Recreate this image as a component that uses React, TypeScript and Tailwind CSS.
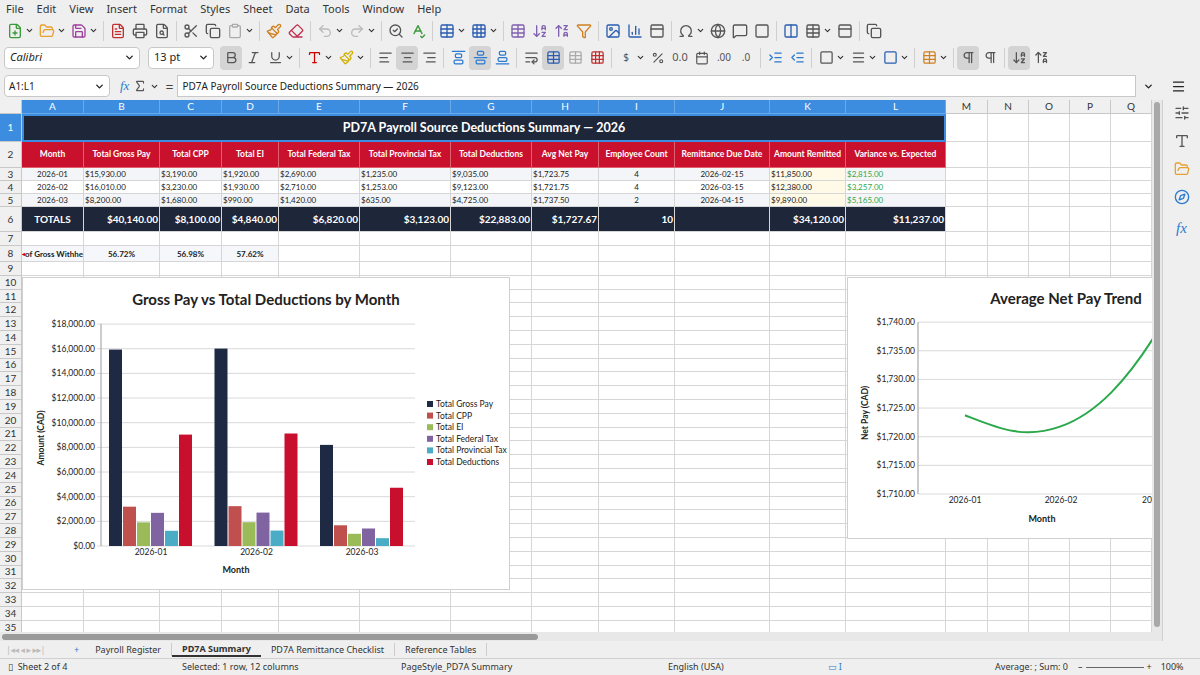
import React from "react";
import { FilePlus, FolderOpen, Save, FileText, Printer, FileSearch, Scissors, Copy, Clipboard, Paintbrush, Eraser, Undo2, Redo2, SearchCheck, SpellCheck, Table, Grid3x3, ArrowDownAZ, ArrowUpZA, Filter, Image, BarChart3, Omega, Globe, MessageSquare, Square, Columns, PanelTop, Bold, Italic, Underline, AlignLeft, AlignCenter, AlignRight, AlignVerticalJustifyStart, AlignVerticalJustifyCenter, AlignVerticalJustifyEnd, WrapText, Percent, Calendar, IndentIncrease, IndentDecrease, Menu, SlidersHorizontal, Compass, ChevronDown, Pilcrow, Sigma, Type } from "lucide-react";

const UI = { fontFamily: '"Noto Sans", "DejaVu Sans", sans-serif' };
const CELL = { fontFamily: 'Lato, "Open Sans", sans-serif' };

const colW = [62, 76, 62, 57, 81, 91, 81, 67, 76, 95, 76, 100, 42, 41, 41, 41, 41];
const letters = "ABCDEFGHIJKLMNOPQ".split("");

const headers = ["Month", "Total Gross Pay", "Total CPP", "Total EI", "Total Federal Tax", "Total Provincial Tax", "Total Deductions", "Avg Net Pay", "Employee Count", "Remittance Due Date", "Amount Remitted", "Variance vs. Expected"];
const data = [
  ["2026-01", "$15,930.00", "$3,190.00", "$1,920.00", "$2,690.00", "$1,235.00", "$9,035.00", "$1,723.75", "4", "2026-02-15", "$11,850.00", "$2,815.00"],
  ["2026-02", "$16,010.00", "$3,230.00", "$1,930.00", "$2,710.00", "$1,253.00", "$9,123.00", "$1,721.75", "4", "2026-03-15", "$12,380.00", "$3,257.00"],
  ["2026-03", "$8,200.00", "$1,680.00", "$990.00", "$1,420.00", "$635.00", "$4,725.00", "$1,737.50", "2", "2026-04-15", "$9,890.00", "$5,165.00"],
];
const totals = ["TOTALS", "$40,140.00", "$8,100.00", "$4,840.00", "$6,820.00", "$3,123.00", "$22,883.00", "$1,727.67", "10", "", "$34,120.00", "$11,237.00"];

function Tb({ children, active = false }: { children: React.ReactNode; active?: boolean }) {
  return <div className={`flex items-center justify-center h-[24px] min-w-[22px] px-[2px] rounded-sm text-[#555] ${active ? "bg-[#d4d4d4]" : ""}`}>{children}</div>;
}
const Sep = () => <div className="w-px h-[20px] bg-[#d0d0d0] mx-[3px]" />;
const Dd = () => <ChevronDown size={9} className="text-[#333] -ml-[1px] mr-[2px]" strokeWidth={3} />;

function RowHead({ n, h, sel = false }: { n: string; h: string; sel?: boolean }) {
  return <div className={`w-[22px] shrink-0 ${h} flex items-center justify-center text-[10px] border-b border-r border-[#c8c8c8] ${sel ? "bg-[#3c8de0] text-white" : "bg-[#f0f0f0] text-[#333]"}`}>{n}</div>;
}

function BarChart() {
  const y0 = 268, k = 12.33 / 1000;
  const vals = [[15930, 3190, 1920, 2690, 1235, 9035], [16010, 3230, 1930, 2710, 1253, 9123], [8200, 1680, 990, 1420, 635, 4725]];
  const cols = ["#1e2a44", "#c0504d", "#9bbb59", "#8064a2", "#4bacc6", "#c8102e"];
  const names = ["Total Gross Pay", "Total CPP", "Total EI", "Total Federal Tax", "Total Provincial Tax", "Total Deductions"];
  return (
    <svg width="486" height="311" className="block" style={CELL}>
      <rect x="0" y="0" width="486" height="311" fill="white" />
      <text x="243" y="27" textAnchor="middle" fontSize="15" fontWeight="bold" fill="#222">Gross Pay vs Total Deductions by Month</text>
      {Array.from({ length: 10 }).map((_, i) => {
        const y = y0 - i * 2000 * k;
        return <g key={i}><line x1="74" x2="392" y1={y} y2={y} stroke="#d9d9d9" /><text x="72" y={y + 3} textAnchor="end" fontSize="8.5" fill="#222">${(i * 2000).toLocaleString("en-US")}.00</text></g>;
      })}
      <line x1="78" x2="78" y1={y0 - 18000 * k} y2={y0} stroke="#999" />
      {vals.map((g, gi) => g.map((v, i) => {
        const x = 86 + gi * 105.5 + i * 14;
        return <rect key={gi + "-" + i} x={x} y={y0 - v * k} width="13" height={v * k} fill={cols[i]} />;
      }))}
      {["2026-01", "2026-02", "2026-03"].map((m, i) => <text key={m} x={128 + i * 105.5} y={y0 + 9} textAnchor="middle" fontSize="8.5" fill="#222">{m}</text>)}
      <text x="213" y={y0 + 27} textAnchor="middle" fontSize="9" fontWeight="bold" fill="#222">Month</text>
      <text transform={`translate(21,160) rotate(-90)`} textAnchor="middle" fontSize="8.5" fontWeight="bold" fill="#222">Amount (CAD)</text>
      {names.map((n, i) => <g key={n}><rect x="404" y={123 + i * 11.6} width="6" height="6" fill={cols[i]} /><text x="413" y={129 + i * 11.6} fontSize="8.5" fill="#222">{n}</text></g>)}
    </svg>
  );
}

function LineChart() {
  const y = (v: number) => 216 - (v - 1710) * 5.73;
  return (
    <svg width="305" height="260" className="block" style={CELL}>
      <rect x="0" y="0" width="305" height="260" fill="white" />
      <text x="218" y="26" textAnchor="middle" fontSize="15" fontWeight="bold" fill="#222">Average Net Pay Trend</text>
      {[1710, 1715, 1720, 1725, 1730, 1735, 1740].map((v) => <g key={v}><line x1="70" x2="305" y1={y(v)} y2={y(v)} stroke="#d9d9d9" /><text x="67" y={y(v) + 3} textAnchor="end" fontSize="8.5" fill="#222">${v.toLocaleString("en-US")}.00</text></g>)}
      <line x1="70" x2="70" y1={y(1740)} y2={y(1710)} stroke="#999" />
      <path d={`M 117 ${y(1723.75)} C 150 ${y(1721.5)}, 175 ${y(1719.5)}, 212 ${y(1721.75)} S 280 ${y(1730)}, 310 ${y(1738.5)}`} stroke="#2aa84a" strokeWidth="2" fill="none" />
      {["2026-01", "2026-02"].map((m, i) => <text key={m} x={117 + i * 96} y="225" textAnchor="middle" fontSize="8.5" fill="#222">{m}</text>)}
      <text x="294" y="225" fontSize="8.5" fill="#222">202</text>
      <text x="194" y="244" textAnchor="middle" fontSize="9" fontWeight="bold" fill="#222">Month</text>
      <text transform="translate(20,135) rotate(-90)" textAnchor="middle" fontSize="8.5" fontWeight="bold" fill="#222">Net Pay (CAD)</text>
    </svg>
  );
}

export default function App() {
  const cellBase = "shrink-0 border-r border-b border-[#d6d6d6] overflow-hidden whitespace-nowrap flex items-center";
  const emptyRest = (h: string, from: number) => colW.slice(from).map((w, i) => <div key={i} className={`${cellBase} ${h} bg-white`} style={{ width: w }} />);
  const align = (i: number) => (i === 0 || i === 8 || i === 9 ? "justify-center" : "justify-start pl-[1px]");
  return (
    <div className="w-[1200px] h-[675px] overflow-hidden bg-[#efefef] flex flex-col text-[#222]" style={UI}>
      {/* Menu */}
      <div className="h-[18px] shrink-0 flex items-center gap-[13px] px-[6px] text-[11px] text-[#333]">
        {["File", "Edit", "View", "Insert", "Format", "Styles", "Sheet", "Data", "Tools", "Window", "Help"].map((m) => <span key={m}>{m}</span>)}
      </div>
      {/* Toolbar 1 */}
      <div className="h-[25px] shrink-0 flex items-center px-[4px]">
        <Tb><FilePlus size={16} className="text-[#3a9a3a]" /></Tb><Dd />
        <Tb><FolderOpen size={16} className="text-[#e8a030]" /></Tb><Dd />
        <Tb><Save size={16} className="text-[#a040a0]" /></Tb><Dd />
        <Sep />
        <Tb><FileText size={16} className="text-[#c03030]" /></Tb><Tb><Printer size={16} /></Tb><Tb><FileSearch size={16} /></Tb>
        <Sep />
        <Tb><Scissors size={16} /></Tb><Tb><Copy size={16} /></Tb><Tb><Clipboard size={16} className="text-[#aaa]" /></Tb><Dd />
        <Sep />
        <Tb><Paintbrush size={16} className="text-[#d08020]" /></Tb><Tb><Eraser size={16} className="text-[#c03050]" /></Tb>
        <Sep />
        <Tb><Undo2 size={16} className="text-[#bbb]" /></Tb><Dd /><Tb><Redo2 size={16} className="text-[#bbb]" /></Tb><Dd />
        <Sep />
        <Tb><SearchCheck size={16} /></Tb><Tb><SpellCheck size={16} className="text-[#3a9a3a]" /></Tb>
        <Sep />
        <Tb><Table size={16} className="text-[#2a5db0]" /></Tb><Dd /><Tb><Grid3x3 size={16} className="text-[#2a5db0]" /></Tb><Dd />
        <Sep />
        <Tb><Table size={16} className="text-[#8060b0]" /></Tb><Tb><ArrowDownAZ size={16} className="text-[#8060b0]" /></Tb><Tb><ArrowUpZA size={16} className="text-[#8060b0]" /></Tb><Tb><Filter size={16} className="text-[#d08020]" /></Tb>
        <Sep />
        <Tb><Image size={16} className="text-[#2a5db0]" /></Tb><Tb><BarChart3 size={16} className="text-[#2a5db0]" /></Tb><Tb><PanelTop size={16} /></Tb>
        <Sep />
        <Tb><Omega size={16} /></Tb><Dd /><Tb><Globe size={16} /></Tb><Tb><MessageSquare size={16} /></Tb><Tb><Square size={16} /></Tb>
        <Sep />
        <Tb><Columns size={16} className="text-[#2a5db0]" /></Tb><Tb><Table size={16} /></Tb><Dd /><Tb><PanelTop size={16} /></Tb>
        <Sep />
        <Tb><Copy size={16} /></Tb>
      </div>
      {/* Toolbar 2 */}
      <div className="h-[29px] shrink-0 flex items-center px-[4px]">
        <div className="w-[136px] h-[22px] bg-white border border-[#c8c8c8] rounded-sm flex items-center justify-between pl-[5px] pr-[4px] text-[11px] italic">Calibri<ChevronDown size={11} strokeWidth={3} /></div>
        <div className="w-[66px] h-[22px] ml-[8px] bg-white border border-[#c8c8c8] rounded-sm flex items-center justify-between pl-[5px] pr-[4px] text-[11px]">13 pt<ChevronDown size={11} strokeWidth={3} /></div>
        <div className="w-[6px]" />
        <Tb active><Bold size={15} /></Tb><Tb><Italic size={15} /></Tb><Tb><Underline size={15} /></Tb><Dd />
        <Sep />
        <Tb><Type size={15} className="text-[#c00]" /></Tb><Dd /><Tb><Paintbrush size={15} className="text-[#d0b000]" /></Tb><Dd />
        <Sep />
        <Tb><AlignLeft size={15} /></Tb><Tb active><AlignCenter size={15} /></Tb><Tb><AlignRight size={15} /></Tb>
        <Sep />
        <Tb><AlignVerticalJustifyStart size={15} className="text-[#2a7ad0]" /></Tb><Tb active><AlignVerticalJustifyCenter size={15} className="text-[#2a7ad0]" /></Tb><Tb><AlignVerticalJustifyEnd size={15} className="text-[#2a7ad0]" /></Tb>
        <Sep />
        <Tb><WrapText size={15} /></Tb><Tb active><Table size={15} className="text-[#2a5db0]" /></Tb><Tb><Table size={15} className="text-[#aaa]" /></Tb><Tb><Grid3x3 size={15} className="text-[#c03030]" /></Tb>
        <Sep />
        <Tb><span className="text-[10px]">$</span></Tb><Dd /><Tb><Percent size={14} /></Tb><Tb><span className="text-[11px]">0.0</span></Tb><Tb><Calendar size={14} /></Tb><Tb><span className="text-[10px]">.00</span></Tb><Tb><span className="text-[10px]">.0</span></Tb>
        <Sep />
        <Tb><IndentIncrease size={15} className="text-[#2a7ad0]" /></Tb><Tb><IndentDecrease size={15} className="text-[#2a7ad0]" /></Tb>
        <Sep />
        <Tb><Square size={15} /></Tb><Dd /><Tb><Menu size={15} /></Tb><Dd /><Tb><Square size={15} className="text-[#2a5db0]" /></Tb><Dd />
        <Sep />
        <Tb><Table size={15} className="text-[#d08020]" /></Tb><Dd />
        <Sep />
        <Tb active><Pilcrow size={15} /></Tb><Tb><Pilcrow size={15} /></Tb>
        <Sep />
        <Tb active><ArrowDownAZ size={15} /></Tb><Tb><ArrowUpZA size={15} /></Tb>
      </div>
      {/* Formula bar */}
      <div className="h-[28px] shrink-0 flex items-center px-[4px] gap-[4px]">
        <div className="w-[106px] h-[22px] bg-white border border-[#c8c8c8] rounded-sm flex items-center justify-between pl-[4px] pr-[4px] text-[10px]">A1:L1<ChevronDown size={11} strokeWidth={3} /></div>
        <span className="ml-[6px] text-[#2a7ad0] italic text-[13px]" style={{ fontFamily: '"Liberation Serif", serif' }}>fx</span>
        <Sigma size={14} className="text-[#555]" /><Dd />
        <span className="text-[14px] text-[#444]">=</span>
        <div className="flex-1 h-[22px] bg-white border border-[#c8c8c8] flex items-center pl-[4px] text-[10px]">PD7A Payroll Source Deductions Summary — 2026</div>
        <ChevronDown size={11} strokeWidth={3} className="mx-[3px]" />
        <div className="w-[35px] h-[22px] flex items-center justify-center"><Menu size={15} /></div>
      </div>
      {/* Main */}
      <div className="flex h-[541px] shrink-0">
        <div className="w-[1152px] flex flex-col">
          <div className="h-[532px] relative overflow-hidden bg-white" style={CELL}>
            <div className="flex h-[14px]">
              <div className="w-[22px] shrink-0 bg-[#f0f0f0] border-r border-b border-[#c8c8c8]" />
              {colW.map((w, i) => <div key={i} style={{ width: w }} className={`shrink-0 flex items-center justify-center text-[10px] border-r border-b ${i < 12 ? "bg-[#3c8de0] text-white border-[#6aa8e8]" : "bg-[#f0f0f0] text-[#333] border-[#c8c8c8]"}`}>{letters[i]}</div>)}
            </div>
            <div className="flex">
              <RowHead n="1" h="h-[28px]" sel />
              <div className="w-[924px] shrink-0 h-[28px] bg-[#1e263a] text-white text-[12.5px] font-bold flex items-center justify-center border-2 border-[#3c8de0]">PD7A Payroll Source Deductions Summary — 2026</div>
              {emptyRest("h-[28px]", 12)}
            </div>
            <div className="flex">
              <RowHead n="2" h="h-[26px]" />
              {headers.map((t, i) => <div key={i} style={{ width: colW[i] }} className={`${cellBase} h-[26px] bg-[#c9112d] text-white text-[8.5px] font-bold justify-center border-[#e06070]`}>{t}</div>)}
              {emptyRest("h-[26px]", 12)}
            </div>
            {data.map((r, ri) => (
              <div className="flex" key={ri}>
                <RowHead n={String(ri + 3)} h="h-[13px]" />
                {r.map((t, i) => <div key={i} style={{ width: colW[i] }} className={`${cellBase} h-[13px] text-[8px] ${align(i)} ${i === 10 ? "bg-[#fff9e8]" : ri === 1 ? "bg-white" : "bg-[#f3f5f8]"} ${i === 11 ? "text-[#2ea84f]" : "text-[#222]"}`}>{t}</div>)}
                {emptyRest("h-[13px]", 12)}
              </div>
            ))}
            <div className="flex">
              <RowHead n="6" h="h-[25px]" />
              {totals.map((t, i) => <div key={i} style={{ width: colW[i] }} className={`${cellBase} h-[25px] bg-[#1e263a] text-white text-[10px] font-bold border-[#8a90a0] ${i === 0 ? "justify-center" : "justify-end pr-[1px]"}`}>{t}</div>)}
              {emptyRest("h-[25px]", 12)}
            </div>
            <div className="flex">
              <RowHead n="7" h="h-[14px]" />
              {emptyRest("h-[14px]", 0)}
            </div>
            <div className="flex">
              <RowHead n="8" h="h-[16px]" />
              {["of Gross Withhe", "56.72%", "56.98%", "57.62%"].map((t, i) => <div key={i} style={{ width: colW[i] }} className={`${cellBase} h-[16px] bg-[#f5f7fa] text-[8px] font-bold ${i === 0 ? "justify-start" : "justify-center"}`}>{i === 0 ? <><span className="text-[#c00] text-[6px]">◂</span>{t}</> : t}</div>)}
              {emptyRest("h-[16px]", 4)}
            </div>
            {Array.from({ length: 27 }).map((_, k) => (
              <div className="flex" key={k}>
                <RowHead n={String(k + 9)} h="h-[13.8px]" />
                {emptyRest("h-[13.8px]", 0)}
              </div>
            ))}
            <div className="absolute left-[22px] top-[177px] border border-[#d0d0d0]"><BarChart /></div>
            <div className="absolute left-[847px] top-[177px] border border-[#d0d0d0]"><LineChart /></div>
          </div>
          <div className="h-[9px] bg-[#e8e8e8] flex items-center px-[2px]"><div className="w-[536px] h-[6px] rounded bg-[#9a9a9a]" /></div>
        </div>
        <div className="w-[10px] bg-[#e8e8e8] flex flex-col"><div className="mt-[2px] w-[6px] ml-[2px] h-[525px] rounded bg-[#a8a8a8]" /></div>
        <div className="w-[38px] border-l border-[#d0d0d0] flex flex-col items-center pt-[5px] gap-[12px]">
          <SlidersHorizontal size={16} className="text-[#555]" />
          <Type size={16} className="text-[#555]" />
          <FolderOpen size={16} className="text-[#e8a030]" />
          <Compass size={16} className="text-[#2a7ad0]" />
          <span className="text-[#2a7ad0] italic text-[15px]" style={{ fontFamily: '"Liberation Serif", serif' }}>fx</span>
        </div>
      </div>
      <div className="h-[17px] shrink-0 flex items-center text-[9px] text-[#333] pl-[6px]">
        <div className="w-[62px] text-[#bbb] tracking-tighter whitespace-nowrap">|◂◂ ◂ ▸ ▸▸|</div>
        <span className="text-[#2a7ad0] mx-[6px]">+</span>
        <span className="px-[10px] border-r border-[#ccc]">Payroll Register</span>
        <span className="px-[10px] font-bold border-b-2 border-[#333]">PD7A Summary</span>
        <span className="px-[10px] border-r border-[#ccc]">PD7A Remittance Checklist</span>
        <span className="px-[10px] border-r border-[#ccc]">Reference Tables</span>
      </div>
      <div className="h-[17px] shrink-0 flex items-center text-[9px] text-[#333] border-t border-[#d0d0d0] whitespace-nowrap">
        <span className="pl-[8px] w-[182px]">▯ &nbsp;Sheet 2 of 4</span>
        <span className="w-[219px]">Selected: 1 row, 12 columns</span>
        <span className="w-[267px]">PageStyle_PD7A Summary</span>
        <span className="w-[160px]">English (USA)</span>
        <span className="w-[70px] text-[#2a7ad0]">▭ I</span>
        <span className="w-[180px] text-right pr-[10px]">Average: ; Sum: 0</span>
        <span className="flex items-center gap-[3px]">– <span className="w-[58px] h-px bg-[#666] inline-block" /> + <span className="ml-[6px]">100%</span></span>
      </div>
    </div>
  );
}
